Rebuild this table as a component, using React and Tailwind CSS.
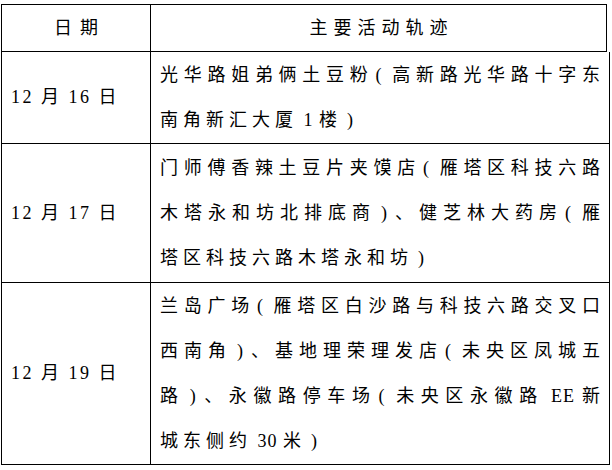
import React from "react";

const rows = [
  {
    date: "12 月 16 日",
    h: "h-[92px]",
    lines: ["光华路姐弟俩土豆粉（高新路光华路十字东", "南角新汇大厦 1 楼）"],
  },
  {
    date: "12 月 17 日",
    h: "h-[139px]",
    lines: [
      "门师傅香辣土豆片夹馍店（雁塔区科技六路",
      "木塔永和坊北排底商）、健芝林大药房（雁",
      "塔区科技六路木塔永和坊）",
    ],
  },
  {
    date: "12 月 19 日",
    h: "h-[182px]",
    lines: [
      "兰岛广场（雁塔区白沙路与科技六路交叉口",
      "西南角）、基地理荣理发店（未央区凤城五",
      "路）、永徽路停车场（未央区永徽路 EE 新",
      "城东侧约 30 米）",
    ],
  },
];

// latin runs keep tight spacing, full-width parens drawn thin like the source doc
const Seg = ({ text }) => {
  const parts = text.split(/( ?[A-Za-z0-9]+ ?|（|）)/).filter(Boolean);
  return parts.map((p, i) => {
    if (p === "（")
      return (
        <span key={i} className="inline-block w-[18px] pl-[2px] text-left">
          (
        </span>
      );
    if (p === "）")
      return (
        <span key={i} className="inline-block w-[18px] pl-[5px] text-left">
          )
        </span>
      );
    if (/[A-Za-z0-9]/.test(p))
      return (
        <span key={i} className="tracking-[1px]">
          {p}
        </span>
      );
    return <React.Fragment key={i}>{p}</React.Fragment>;
  });
};

const Lines = ({ lines }) => (
  <div className="w-full">
    {lines.map((t, i) => (
      <div
        key={i}
        className={
          i < lines.length - 1
            ? "whitespace-nowrap text-justify [text-align-last:justify]"
            : "whitespace-nowrap"
        }
      >
        <Seg text={t} />
      </div>
    ))}
  </div>
);

export default function App() {
  return (
    <div className="w-[612px] h-[470px] bg-white pt-[4px] pl-[1px] text-black text-[18px] font-['Liberation_Serif','Noto_Sans_CJK_SC',serif]">
      {/* header */}
      <div className="flex h-[48px] w-[606px] border border-black">
        <div className="w-[149px] border-r border-black flex items-center justify-center pl-[8px] tracking-[8px]">
          日期
        </div>
        <div className="flex-1 flex items-center justify-center pl-[6px] tracking-[6px]">
          主要活动轨迹
        </div>
      </div>

      {rows.map((r) => (
        <div
          key={r.date}
          className={`flex w-[609px] border-x border-b border-black ${r.h}`}
        >
          <div className="w-[149px] border-r border-black flex items-center pl-[9px] tracking-[2.5px]">
            {r.date}
          </div>
          <div className="flex-1 flex items-center pl-[9px] pr-[4px] leading-[45px] tracking-[5px]">
            <Lines lines={r.lines} />
          </div>
        </div>
      ))}
    </div>
  );
}
